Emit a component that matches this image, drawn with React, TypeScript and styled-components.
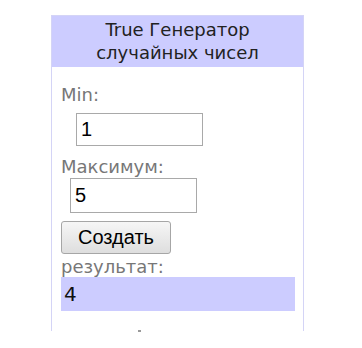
import React from "react";
import styled, { createGlobalStyle } from "styled-components";

const Global = createGlobalStyle`
  html, body { margin: 0; padding: 0; background: #ffffff; }
  body { font-family: "DejaVu Sans", Verdana, sans-serif; }
`;

const Page = styled.div`
  padding: 15px 0 0 51px;
  height: 348px;
  box-sizing: border-box;
`;

const Panel = styled.div`
  width: 253px;
  height: 316px;
  box-sizing: border-box;
  border: 1px solid #d4d4f6;
  border-bottom: none;
  background: #ffffff;
  display: flex;
  flex-direction: column;
`;

const Header = styled.div`
  background: #ccccff;
  color: #222222;
  font-family: "DejaVu Sans", Verdana, sans-serif;
  font-size: 18px;
  line-height: 23px;
  text-align: center;
  padding: 2px 0 3px;
`;

const Body = styled.div`
  padding: 17px 8px 0 9px;
  display: flex;
  flex-direction: column;
  align-items: flex-start;
`;

const Label = styled.div<{ $gap?: number }>`
  font-family: "DejaVu Sans", Verdana, sans-serif;
  font-size: 18px;
  line-height: 21px;
  color: #777777;
  margin-top: ${(p) => p.$gap ?? 0}px;
`;

const NumberInput = styled.input<{ $indent: number; $gap: number; $h: number }>`
  box-sizing: border-box;
  width: 127px;
  height: ${(p) => p.$h}px;
  margin: ${(p) => p.$gap}px 0 0 ${(p) => p.$indent}px;
  border: 1px solid #a9a9a9;
  padding: 0 4px;
  font-family: "Liberation Sans", Arial, sans-serif;
  font-size: 20px;
  color: #000000;
  background: #ffffff;
  outline: none;
`;

const Button = styled.button`
  box-sizing: border-box;
  width: 110px;
  height: 33px;
  margin-top: 8px;
  border: 1px solid #a6a6a6;
  border-radius: 3px;
  background: linear-gradient(#f6f6f6, #dedede);
  font-family: "Liberation Sans", Arial, sans-serif;
  font-size: 20px;
  color: #000000;
  padding: 0;
  text-align: center;
`;

const Result = styled.div`
  align-self: stretch;
  height: 34px;
  background: #ccccff;
  font-family: "DejaVu Sans", Verdana, sans-serif;
  font-size: 20px;
  line-height: 34px;
  color: #111111;
  padding-left: 3px;
`;

const Footer = styled.div`
  margin-top: 19px;
  padding-left: 86px;
  display: flex;
`;

const Tick = styled.span`
  width: 3px;
  height: 2px;
  background: #9a9a9a;
`;

export default function App() {
  return (
    <>
      <Global />
      <Page>
        <Panel>
          <Header>
            True Генератор
            <br />
            случайных чисел
          </Header>
          <Body>
            <Label>Min:</Label>
            <NumberInput $indent={15} $gap={8} $h={33} defaultValue="1" />
            <Label $gap={10}>Максимум:</Label>
            <NumberInput $indent={9} $gap={1} $h={35} defaultValue="5" />
            <Button>Создать</Button>
            <Label $gap={2}>результат:</Label>
            <Result>4</Result>
          </Body>
          <Footer>
            <Tick />
          </Footer>
        </Panel>
      </Page>
    </>
  );
}
